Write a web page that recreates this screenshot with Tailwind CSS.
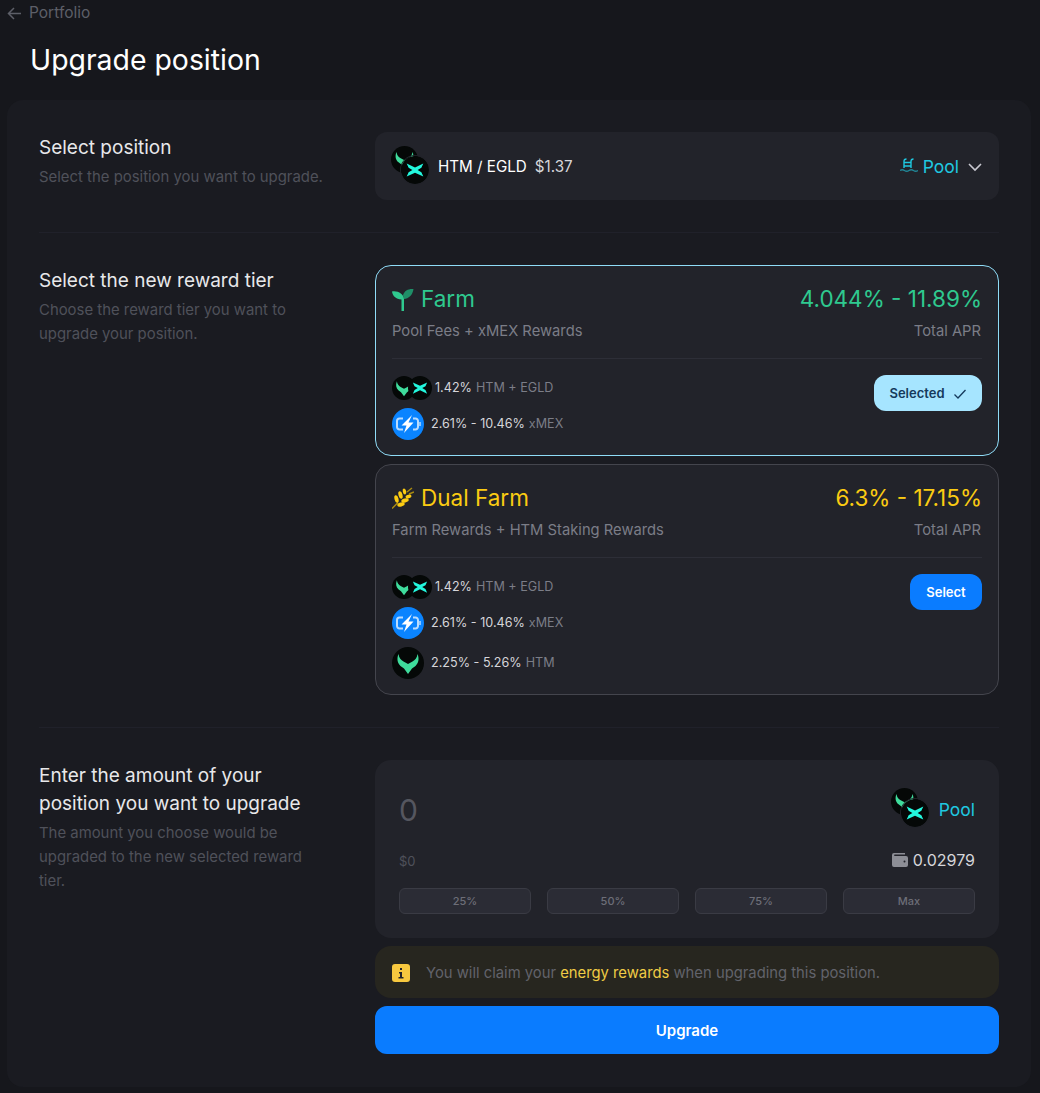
<!DOCTYPE html>
<html lang="en">
<head>
<meta charset="UTF-8" />
<title>Upgrade position</title>
<script src="https://cdn.jsdelivr.net/npm/@tailwindcss/browser@4"></script>
</head>
<body class="bg-[#16171c] font-['Inter',sans-serif] text-white h-[1093px] overflow-hidden">
<svg class="hidden">
	<symbol id="htm" viewBox="0 0 32 32">
		<circle cx="16" cy="16" r="16" fill="#050807"/>
		<path d="M6.500 7c.5 4 2.500 6 5 7.500l4.500 2.500 4.500-2.500c2.500-1.500 4.500-3.500 5-7.500 2 5 1 9-2 12l-3.500 2.500L16 27l-4-5.500L8.500 19c-3-3-4-7-2-12z" fill="#3fdc9c"/>
	</symbol>
	<symbol id="egld" viewBox="0 0 32 32">
		<circle cx="16" cy="16" r="16" fill="#050807"/>
		<path d="M6.500 8.500L16 13l9.500-4.500-2.200 5L19 16l4.300 2.500 2.200 5L16 19l-9.500 4.500 2.200-5L13 16l-4.300-2.500z" fill="#23f7dd"/>
	</symbol>
	<symbol id="xmex" viewBox="0 0 32 32">
		<circle cx="16" cy="16" r="16" fill="#0a84ff"/>
		<path d="M11 10.500H7.500a2.500 2.500 0 0 0-2.500 2.500v6a2.500 2.500 0 0 0 2.500 2.500H11M21 10.500h2.500A2.500 2.500 0 0 1 26 13v6a2.500 2.500 0 0 1-2.500 2.500H21" fill="none" stroke="#b9dcff" stroke-width="2"/>
		<path d="M28 14v4" stroke="#b9dcff" stroke-width="1.500"/>
		<path d="M20 7L9.500 17.500h5L12 25l9.500-10.500h-5z" fill="#fff"/>
	</symbol>
</svg>

<div class="flex items-center gap-[7px] h-[26px] pl-[7px] text-[15.500px] text-[#5d5f68]">
	<svg class="w-[15px] h-[15px]" viewBox="0 0 15 15" fill="none" stroke="#5d5f68" stroke-width="1.500"><path d="M14 7.500H1.500M7 2L1.500 7.500 7 13"/></svg>
	<span>Portfolio</span>
</div>
<h1 class="mt-[15px] ml-[30px] text-[28.400px] leading-[38px]">Upgrade position</h1>

<main class="mt-[21px] mx-[7px] w-[1024px] h-[987px] bg-[#1a1b21] rounded-2xl pt-8 px-8">
	<section class="flex h-[68px]">
		<div class="w-[336px] text-[#e8e8ea]">
			<p class="text-[19px] leading-[30px] mt-[1px]">Select position</p>
			<p class="text-[14.900px] leading-5 text-[#4f515a] mt-[4px]">Select the position you want to upgrade.</p>
		</div>
		<div class="flex-1 bg-[#22232a] rounded-xl flex items-center px-4">
			<span class="relative w-10 h-10 mr-[7px]">
				<svg class="absolute left-0 top-0 w-[27px] h-[27px]"><use href="#htm"/></svg>
				<svg class="absolute left-[10px] top-[10px] w-7 h-7 rounded-full ring-1 ring-[#22232a]"><use href="#egld"/></svg>
			</span>
			<span class="text-[15.200px] mt-[2px]">HTM / EGLD</span>
			<span class="ml-2 text-[15.200px] text-[#d6d6da] mt-[2px]">$1.37</span>
			<svg class="ml-auto w-[18px] h-[18px]" viewBox="0 0 18 18" fill="none" stroke="#1fc8e0" stroke-width="1.400"><path d="M4 11V4.500C4 3 5 2 6.500 2M11 11V4.500C11 3 12 2 13.500 2M4 5.500h7M4 9h7"/><path d="M0 13.500c1.500-1 3-1 4.500 0s3 1 4.500 0 3-1 4.500 0 3 1 4.500 0" stroke-opacity=".6"/></svg>
			<span class="ml-[5px] text-[17.500px] text-[#1fc8e0] mt-[2px]">Pool</span>
			<svg class="ml-2 w-4 h-4 mt-[1px]" viewBox="0 0 16 16" fill="none" stroke="#c8c8d0" stroke-width="1.600"><path d="M2 5l6 6 6-6"/></svg>
		</div>
	</section>

	<hr class="mt-8 mb-8 border-[#20212a]" />

	<section class="flex">
		<div class="w-[336px] pt-[1px]">
			<p class="text-[19px] leading-[30px] text-[#e8e8ea]">Select the new reward tier</p>
			<p class="text-[14.900px] leading-6 text-[#4f515a] mt-[2px] w-[270px]">Choose the reward tier you want to upgrade your position.</p>
		</div>
		<div class="flex-1 flex flex-col gap-2">
			<article class="h-[191px] bg-[#22232a] rounded-2xl border border-[#8fdcf7] px-4 pt-[15px]">
				<div class="flex justify-between items-center h-9">
					<div class="flex items-center gap-[7px] text-[#2fc98f] text-[22.500px]">
						<svg class="w-[22px] h-[23px]" viewBox="0 0 22 23"><path d="M12 11c4.500-.5 8.500-3.500 9.500-10-5-.5-9 1.500-10.500 6z" fill="#1f8f68"/><path d="M9.500 23h2.500V11C11.500 6 6 2.500 0 3.500 .5 8 4 11 9.500 11.500z" fill="#2fc98f"/></svg>
						Farm
					</div>
					<div class="text-[#2fc98f] text-[22.500px]">4.044% - 11.89%</div>
				</div>
				<div class="flex justify-between text-[14.750px] leading-5 mt-[4px] text-[#7b7d87]"><span>Pool Fees + xMEX Rewards</span><span class="mr-[1px]">Total APR</span></div>
				<div class="border-t border-[#2d2e37] mt-[17px] flex justify-between pt-[13px]">
					<div class="text-[12.600px] text-[#7b7d87]">
						<div class="flex items-center h-8">
							<svg class="w-6 h-6"><use href="#htm"/></svg><svg class="w-6 h-6 -ml-[8px]"><use href="#egld"/></svg>
							<span class="ml-[3px] text-[#d6d6da]">1.42%</span><span class="ml-1">HTM + EGLD</span>
						</div>
						<div class="flex items-center h-8 mt-[4px]">
							<svg class="w-8 h-8"><use href="#xmex"/></svg>
							<span class="ml-[7px] text-[#d6d6da]">2.61% - 10.46%</span><span class="ml-1">xMEX</span>
						</div>
					</div>
					<button class="mt-[3px] pt-[1px] h-9 w-[108px] rounded-xl bg-[#a6e5ff] text-[#153a5c] text-[13px] font-semibold flex items-center justify-center gap-2">Selected
						<svg class="w-[14px] h-[14px]" viewBox="0 0 14 14" fill="none" stroke="#153a5c" stroke-width="1.300"><path d="M1.500 7.500L5 11l7.500-8"/></svg>
					</button>
				</div>
			</article>

			<article class="h-[231px] bg-[#22232a] rounded-2xl border border-[#44454d] px-4 pt-[15px]">
				<div class="flex justify-between items-center h-9">
					<div class="flex items-center gap-[7px] text-[#fbcb12] text-[22.500px]">
						<svg class="w-[22px] h-[22px]" viewBox="0 0 22 22" fill="#fbcb12"><path d="M0 21.500l6-6M15 5l5-4M17 7l5-2" stroke="#a98a12" stroke-width="1.500"/><ellipse cx="4.500" cy="12" rx="3.800" ry="2" transform="rotate(75 4.500 12)"/><ellipse cx="8.500" cy="8" rx="3.800" ry="2" transform="rotate(75 8.500 8)"/><ellipse cx="12.500" cy="4.500" rx="3" ry="1.700" transform="rotate(75 12.500 4.500)"/><ellipse cx="9" cy="17.500" rx="3.800" ry="2" transform="rotate(-15 9 17.500)"/><ellipse cx="13" cy="13.500" rx="3.800" ry="2" transform="rotate(-15 13 13.500)"/><ellipse cx="16.500" cy="9.500" rx="3" ry="1.700" transform="rotate(-15 16.500 9.500)"/></svg>
						Dual Farm
					</div>
					<div class="text-[#fbcb12] text-[22.500px]">6.3% - 17.15%</div>
				</div>
				<div class="flex justify-between text-[14.750px] leading-5 mt-[4px] text-[#7b7d87]"><span>Farm Rewards + HTM Staking Rewards</span><span class="mr-[1px]">Total APR</span></div>
				<div class="border-t border-[#2d2e37] mt-[17px] flex justify-between pt-[13px]">
					<div class="text-[12.600px] text-[#7b7d87]">
						<div class="flex items-center h-8">
							<svg class="w-6 h-6"><use href="#htm"/></svg><svg class="w-6 h-6 -ml-[8px]"><use href="#egld"/></svg>
							<span class="ml-[3px] text-[#d6d6da]">1.42%</span><span class="ml-1">HTM + EGLD</span>
						</div>
						<div class="flex items-center h-8 mt-[4px]">
							<svg class="w-8 h-8"><use href="#xmex"/></svg>
							<span class="ml-[7px] text-[#d6d6da]">2.61% - 10.46%</span><span class="ml-1">xMEX</span>
						</div>
						<div class="flex items-center h-8 mt-2">
							<svg class="w-8 h-8"><use href="#htm"/></svg>
							<span class="ml-[7px] text-[#d6d6da]">2.25% - 5.26%</span><span class="ml-1">HTM</span>
						</div>
					</div>
					<button class="mt-[3px] pt-[1px] h-9 w-[72px] rounded-xl bg-[#0a7cff] text-white text-[13px] font-semibold">Select</button>
				</div>
			</article>
		</div>
	</section>

	<hr class="mt-8 mb-8 border-[#20212a]" />

	<section class="flex">
		<div class="w-[336px] pt-[2px]">
			<p class="text-[19px] leading-7 text-[#e8e8ea] w-[270px]">Enter the amount of your position you want to upgrade</p>
			<p class="text-[14.900px] leading-6 text-[#4f515a] mt-[3px] w-[280px]">The amount you choose would be upgraded to the new selected reward tier.</p>
		</div>
		<div class="flex-1">
			<div class="h-[178px] bg-[#22232a] rounded-2xl px-6 pt-7">
				<div class="flex justify-between items-center h-11">
					<span class="text-[30px] text-[#55565f]">0</span>
					<div class="flex items-center">
						<span class="relative w-10 h-10 mr-[8px]">
							<svg class="absolute left-[0px] -top-[2px] w-[27px] h-[27px]"><use href="#htm"/></svg>
							<svg class="absolute left-[10px] top-[9px] w-7 h-7 rounded-full ring-1 ring-[#22232a]"><use href="#egld"/></svg>
						</span>
						<span class="text-[17.500px] text-[#1fc8e0]">Pool</span>
					</div>
				</div>
				<div class="flex justify-between items-center mt-4 h-6">
					<span class="text-[13px] text-[#4f515a] mt-[4px]">$0</span>
					<span class="flex items-center gap-[5px] text-base text-[#d6d6da]">
						<svg class="w-4 h-[14px]" viewBox="0 0 16 14" fill="#8d8e96"><path d="M2 0h11v1.500H2.500A1 1 0 0 0 2.500 3H14a2 2 0 0 1 2 2v7a2 2 0 0 1-2 2H2a2 2 0 0 1-2-2V2a2 2 0 0 1 2-2z"/><circle cx="12.500" cy="8.500" r="1" fill="#22232a"/></svg>
						0.02979
					</span>
				</div>
				<div class="grid grid-cols-4 gap-4 mt-4">
					<button class="h-[26px] rounded-md bg-[#2b2c35] border border-[#3a3b44] text-[11px] font-medium text-[#6d6e78]">25%</button>
					<button class="h-[26px] rounded-md bg-[#2b2c35] border border-[#3a3b44] text-[11px] font-medium text-[#6d6e78]">50%</button>
					<button class="h-[26px] rounded-md bg-[#2b2c35] border border-[#3a3b44] text-[11px] font-medium text-[#6d6e78]">75%</button>
					<button class="h-[26px] rounded-md bg-[#2b2c35] border border-[#3a3b44] text-[11px] font-medium text-[#6d6e78]">Max</button>
				</div>
			</div>
			<div class="mt-2 h-[52px] bg-[#27261f] rounded-2xl flex items-center pl-[17px] pt-[2px] text-[14.800px] text-[#62636b]">
				<svg class="w-[18px] h-[18px] mr-4" viewBox="0 0 18 18"><rect width="18" height="18" rx="3" fill="#f7c83f"/><path d="M8 4h2v2H8zM7 8h3v5h1.500v1.500h-5V13H8V9.500H7z" fill="#22232a"/></svg>
				<span>You will claim your <span class="text-[#f0cc45]">energy rewards</span> when upgrading this position.</span>
			</div>
			<button class="mt-2 w-full h-12 rounded-xl bg-[#0a7cff] text-[15px] font-semibold pt-[2px]">Upgrade</button>
		</div>
	</section>
</main>
</body>
</html>
